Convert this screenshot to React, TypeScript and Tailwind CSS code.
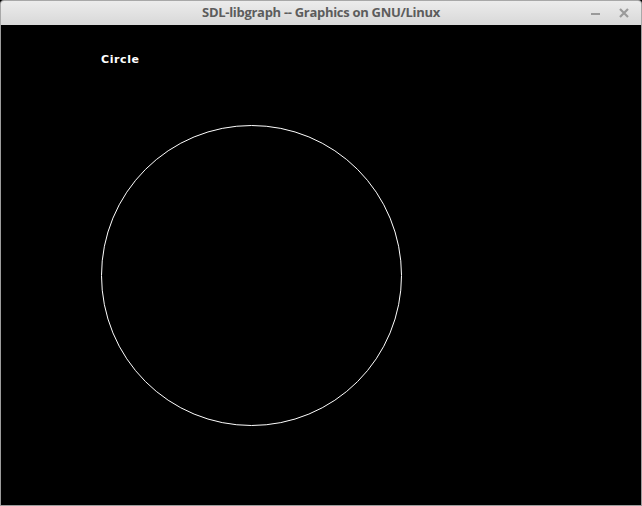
export default function App() {
  return (
    <div className="w-[642px] h-[506px] flex flex-col bg-black overflow-hidden">
      {/* Title bar */}
      <div className="h-[25px] shrink-0 flex items-center relative bg-gradient-to-b from-[#ececec] to-[#d8d8d8] border border-b-0 border-[#a8a8a8] rounded-t-[4px]">
        <div className="flex-1 text-center text-[13px] font-bold text-[#5c5c5c] tracking-[-0.3px]" style={{ fontFamily: '"Open Sans", sans-serif' }}>
          SDL-libgraph -- Graphics on GNU/Linux
        </div>
        <div className="absolute right-[12px] top-0 h-full flex items-center gap-[19px]">
          <div className="w-[9px] h-[2px] bg-[#9a9a9a] mt-[1px]" />
          <svg width="10" height="10" viewBox="0 0 10 10">
            <path d="M1 1 L9 9 M9 1 L1 9" stroke="#9a9a9a" strokeWidth="2.2" />
          </svg>
        </div>
      </div>
      {/* Canvas */}
      <div className="flex-1 border-x border-b border-[#9c9c9c] bg-black relative">
        <div className="absolute left-[100px] top-[27px] text-white text-[11px] font-bold tracking-[0.6px]" style={{ fontFamily: '"DejaVu Sans", sans-serif' }}>
          Circle
        </div>
        <svg width="640" height="480" className="block">
          <circle cx="250.5" cy="250.5" r="150" fill="none" stroke="white" strokeWidth="1" />
        </svg>
      </div>
    </div>
  )
}
